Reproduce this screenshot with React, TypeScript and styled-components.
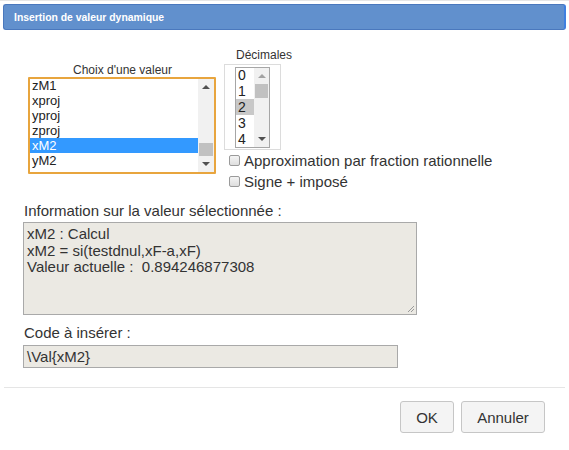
import React from "react";
import styled, { createGlobalStyle } from "styled-components";

const GlobalStyle = createGlobalStyle`
  html, body {
    margin: 0;
    padding: 0;
    background: #ffffff;
  }
  body {
    font-family: "Liberation Sans", Arial, sans-serif;
    color: #333333;
  }
`;

const values = ["zM1", "xproj", "yproj", "zproj", "xM2", "yM2"];
const decimals = ["0", "1", "2", "3", "4"];

const Dialog = styled.div`
  width: 569px;
  height: 450px;
  box-sizing: border-box;
  padding-top: 3px;
  border-top: 1px solid #e6e6e6;
  display: flex;
  flex-direction: column;
`;

const TitleBar = styled.div`
  margin: 0 3px;
  height: 26px;
  box-sizing: border-box;
  background: #6190cd;
  border: 1px solid #4a78bd;
  border-right: 2px solid #3f7fe0;
  border-radius: 3px;
  color: #ffffff;
  font-size: 10.4px;
  font-weight: bold;
  display: flex;
  align-items: center;
  padding-left: 10px;
`;

const Body = styled.div`
  padding-left: 23px;
  display: flex;
  flex-direction: column;
`;

const TopRow = styled.div`
  display: flex;
  align-items: flex-start;
  margin-top: 18px;
`;

const ValueColumn = styled.div`
  margin-left: 5px;
  width: 189px;
  padding-top: 15px;
  display: flex;
  flex-direction: column;
`;

const SmallLabel = styled.div<{ $indent?: number; $left?: boolean }>`
  font-size: 12px;
  line-height: 14px;
  height: 14px;
  white-space: nowrap;
  text-align: ${(p) => (p.$left ? "left" : "center")};
  padding-left: ${(p) => p.$indent ?? 0}px;
`;

const ListBox = styled.div`
  width: 188px;
  height: 97px;
  box-sizing: border-box;
  border: 2px solid #e8a53e;
  border-radius: 1px;
  display: flex;
  overflow: hidden;
  background: #ffffff;
`;

const Items = styled.div`
  flex: 1;
  display: flex;
  flex-direction: column;
  overflow: hidden;
`;

const Item = styled.div<{ $selected?: boolean; $first?: boolean; $h: number; $size: number; $sel?: string }>`
  flex: none;
  height: ${(p) => p.$h}px;
  line-height: ${(p) => p.$h}px;
  font-size: ${(p) => p.$size}px;
  padding-left: 2px;
  margin-top: ${(p) => (p.$first ? -1 : 0)}px;
  background: ${(p) => (p.$selected ? p.$sel ?? "#3399ff" : "transparent")};
  color: ${(p) => (p.$selected && !p.$sel ? "#ffffff" : "#222222")};
`;

const ScrollBar = styled.div<{ $w: number }>`
  width: ${(p) => p.$w}px;
  flex: none;
  background: #f1f1f1;
  display: flex;
  flex-direction: column;
  align-items: center;
`;

const Arrow = styled.div<{ $down?: boolean; $light?: boolean }>`
  height: 16px;
  width: 100%;
  display: flex;
  align-items: center;
  justify-content: center;
  &::after {
    content: "";
    border-left: 4px solid transparent;
    border-right: 4px solid transparent;
    ${(p) =>
      p.$down
        ? `border-top: 4px solid ${p.$light ? "#a3a3a3" : "#505050"};`
        : `border-bottom: 4px solid ${p.$light ? "#a3a3a3" : "#505050"};`}
  }
`;

const Track = styled.div`
  flex: 1;
  width: 100%;
  display: flex;
  flex-direction: column;
`;

const Thumb = styled.div<{ $top: number; $h: number }>`
  margin-top: ${(p) => p.$top}px;
  height: ${(p) => p.$h}px;
  margin-left: 1px;
  margin-right: 1px;
  background: #c1c1c1;
`;

const RightColumn = styled.div`
  margin-left: 7px;
  display: flex;
  flex-direction: column;
`;

const DecimalBlock = styled.div`
  width: 57px;
  display: flex;
  flex-direction: column;
`;

const DecimalFrame = styled.div`
  width: 57px;
  height: 86px;
  box-sizing: border-box;
  border: 1px solid #dcdcdc;
  padding: 2px 0 0 10px;
  margin-top: 2px;
`;

const DecimalList = styled.div`
  width: 35px;
  height: 81px;
  box-sizing: border-box;
  border: 1px solid #a6a6a6;
  display: flex;
  overflow: hidden;
`;

const Options = styled.div`
  margin-top: 0;
  margin-left: 5px;
  display: flex;
  flex-direction: column;
`;

const OptionRow = styled.label`
  display: flex;
  align-items: center;
  height: 21px;
  font-size: 15px;
  white-space: nowrap;
  color: #333333;
`;

const CheckBox = styled.span`
  width: 9px;
  height: 9px;
  border: 1px solid #9a9a9a;
  border-radius: 2px;
  background: linear-gradient(#f4f4f4, #dedede);
  margin-right: 4px;
`;

const FieldLabel = styled.div<{ $top: number }>`
  font-size: 15px;
  line-height: 17px;
  margin-top: ${(p) => p.$top}px;
  margin-left: 1px;
`;

const InfoArea = styled.div`
  position: relative;
  margin-top: 3px;
  width: 394px;
  height: 93px;
  box-sizing: border-box;
  background: #ebe9e3;
  border: 1px solid #a9a9a9;
  padding: 3px 3px 2px;
  font-size: 15px;
  line-height: 16.5px;
  white-space: pre;
  color: #333333;
`;

const Grip = styled.svg`
  position: absolute;
  right: 1px;
  bottom: 1px;
`;

const CodeField = styled.div`
  margin-top: 4px;
  width: 375px;
  height: 23px;
  box-sizing: border-box;
  background: #ebe9e3;
  border: 1px solid #a9a9a9;
  padding: 0 3px;
  font-size: 15px;
  line-height: 21px;
  color: #333333;
`;

const Separator = styled.div`
  margin: 19px 4px 0 4px;
  height: 1px;
  background: #e5e5e5;
`;

const ButtonBar = styled.div`
  display: flex;
  justify-content: flex-end;
  gap: 7px;
  padding: 13px 24px 0 0;
`;

const Button = styled.button<{ $w: number }>`
  width: ${(p) => p.$w}px;
  height: 32px;
  background: #f4f4f4;
  border: 1px solid #c6c6c6;
  border-radius: 3px;
  font-family: "Liberation Sans", Arial, sans-serif;
  font-size: 15px;
  color: #333333;
  padding: 0;
`;

export default function App() {
  return (
    <>
      <GlobalStyle />
      <Dialog>
        <TitleBar>Insertion de valeur dynamique</TitleBar>
        <Body>
          <TopRow>
            <ValueColumn>
              <SmallLabel>Choix d'une valeur</SmallLabel>
              <ListBox>
                <Items>
                  {values.map((v, i) => (
                    <Item key={v} $first={i === 0} $selected={v === "xM2"} $h={15} $size={13}>
                      {v}
                    </Item>
                  ))}
                </Items>
                <ScrollBar $w={16}>
                  <Arrow />
                  <Track>
                    <Thumb $top={48} $h={13} />
                  </Track>
                  <Arrow $down />
                </ScrollBar>
              </ListBox>
            </ValueColumn>
            <RightColumn>
              <DecimalBlock>
                <SmallLabel $left $indent={12}>Décimales</SmallLabel>
                <DecimalFrame>
                  <DecimalList>
                    <Items>
                      {decimals.map((d, i) => (
                        <Item key={d} $first={i === 0} $selected={d === "2"} $sel="#c8c8c8" $h={16} $size={14}>
                          {d}
                        </Item>
                      ))}
                    </Items>
                    <ScrollBar $w={15}>
                      <Arrow $light />
                      <Track>
                        <Thumb $top={0} $h={14} />
                      </Track>
                      <Arrow $down />
                    </ScrollBar>
                  </DecimalList>
                </DecimalFrame>
              </DecimalBlock>
              <Options>
                <OptionRow>
                  <CheckBox />
                  Approximation par fraction rationnelle
                </OptionRow>
                <OptionRow>
                  <CheckBox />
                  Signe + imposé
                </OptionRow>
              </Options>
            </RightColumn>
          </TopRow>
          <FieldLabel $top={10}>Information sur la valeur sélectionnée :</FieldLabel>
          <InfoArea>
            {"xM2 : Calcul\nxM2 = si(testdnul,xF-a,xF)\nValeur actuelle :  0.894246877308"}
            <Grip width="8" height="8" viewBox="0 0 8 8">
              <path d="M7 1 L1 7 M7 4 L4 7" stroke="#9a9a9a" strokeWidth="1" />
            </Grip>
          </InfoArea>
          <FieldLabel $top={9}>Code à insérer :</FieldLabel>
          <CodeField>{"\\Val{xM2}"}</CodeField>
        </Body>
        <Separator />
        <ButtonBar>
          <Button $w={54}>OK</Button>
          <Button $w={84}>Annuler</Button>
        </ButtonBar>
      </Dialog>
    </>
  );
}
